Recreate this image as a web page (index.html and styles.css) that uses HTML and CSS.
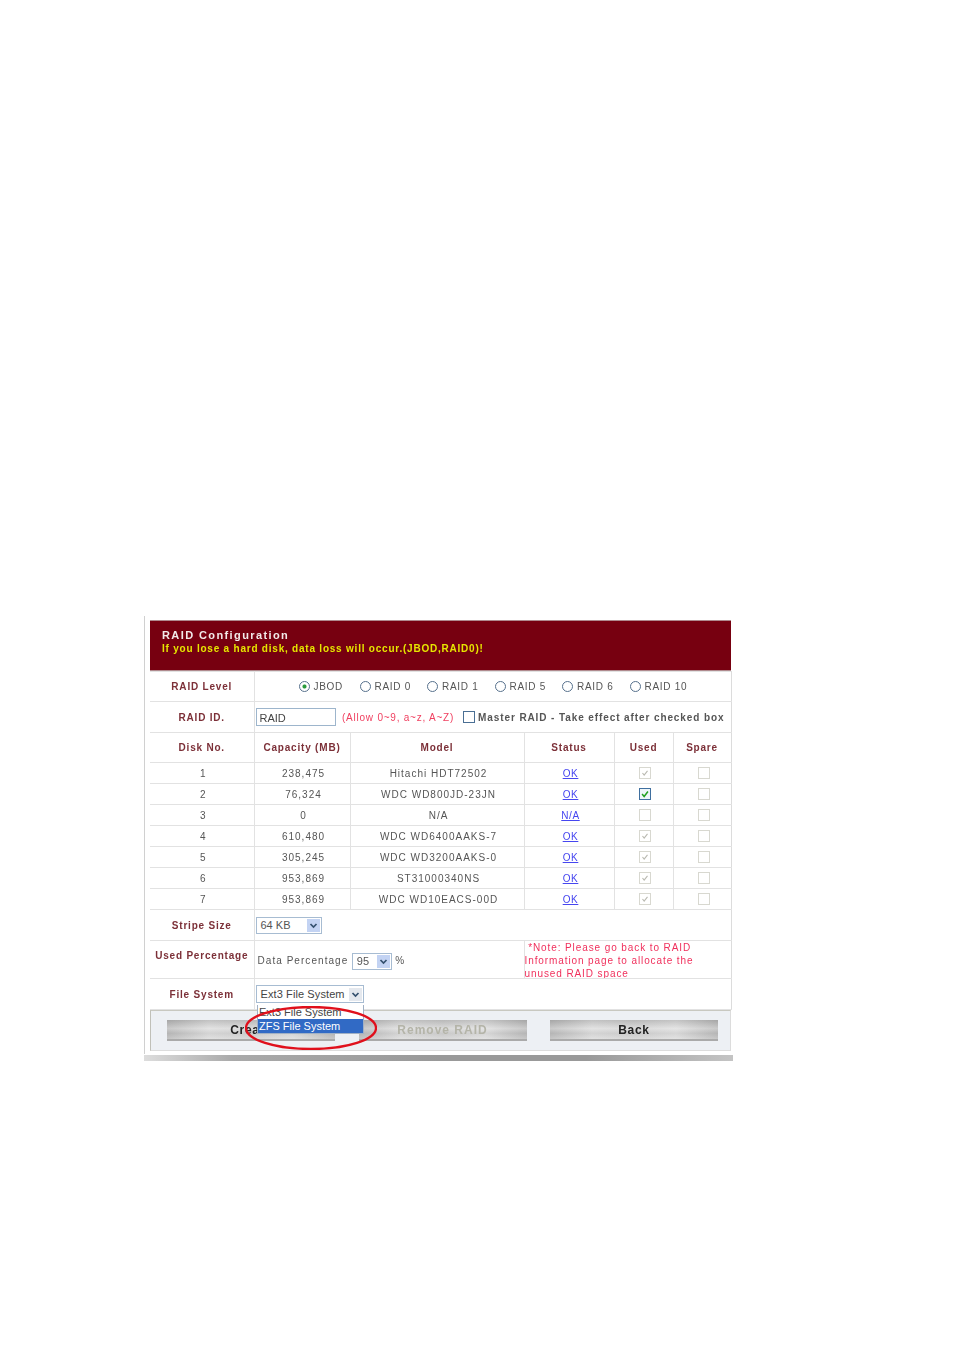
FILE: index.html
```html
<!DOCTYPE html>
<html lang="en">
<head>
<meta charset="utf-8">
<title>RAID Configuration</title>
<link rel="stylesheet" href="styles.css">
</head>
<body>
<main class="shot">
  <div class="panel">
    <header class="banner">
      <h1>RAID Configuration</h1>
      <p>If you lose a hard disk, data loss will occur.(JBOD,RAID0)!</p>
    </header>
    <table class="raid">
      <colgroup>
        <col class="c1"><col class="c2"><col class="c3"><col class="c4"><col class="c5"><col class="c6">
      </colgroup>
      <tr class="r30">
        <th>RAID Level</th>
        <td colspan="5" class="levels">
          <div class="optrow">
            <span class="opt first"><i class="radio on"></i>JBOD</span>
            <span class="opt"><i class="radio"></i>RAID 0</span>
            <span class="opt"><i class="radio"></i>RAID 1</span>
            <span class="opt"><i class="radio"></i>RAID 5</span>
            <span class="opt"><i class="radio"></i>RAID 6</span>
            <span class="opt"><i class="radio"></i>RAID 10</span>
          </div>
        </td>
      </tr>
      <tr class="r31">
        <th>RAID ID.</th>
        <td colspan="5" class="idcell">
          <span class="textbox">RAID</span>
          <span class="allow">(Allow 0~9, a~z, A~Z)</span>
          <i class="check master"></i>
          <span class="masterlabel">Master RAID - Take effect after checked box</span>
        </td>
      </tr>
      <tr class="r30">
        <th>Disk No.</th><th>Capacity (MB)</th><th>Model</th><th>Status</th><th>Used</th><th>Spare</th>
      </tr>
      <tr class="r21">
        <td>1</td><td>238,475</td><td>Hitachi HDT72502</td><td><a href="#">OK</a></td>
        <td><i class="check off"><svg viewBox="0 0 12 12"><path d="M3 6l2 2.500 4-5"/></svg></i></td><td><i class="check off"></i></td>
      </tr>
      <tr class="r21">
        <td>2</td><td>76,324</td><td>WDC WD800JD-23JN</td><td><a href="#">OK</a></td>
        <td><i class="check live"><svg viewBox="0 0 12 12"><path d="M2.500 6l2.500 3 4.500-6"/></svg></i></td><td><i class="check off"></i></td>
      </tr>
      <tr class="r21">
        <td>3</td><td>0</td><td>N/A</td><td><a href="#">N/A</a></td>
        <td><i class="check off"></i></td><td><i class="check off"></i></td>
      </tr>
      <tr class="r21">
        <td>4</td><td>610,480</td><td>WDC WD6400AAKS-7</td><td><a href="#">OK</a></td>
        <td><i class="check off"><svg viewBox="0 0 12 12"><path d="M3 6l2 2.500 4-5"/></svg></i></td><td><i class="check off"></i></td>
      </tr>
      <tr class="r21">
        <td>5</td><td>305,245</td><td>WDC WD3200AAKS-0</td><td><a href="#">OK</a></td>
        <td><i class="check off"><svg viewBox="0 0 12 12"><path d="M3 6l2 2.500 4-5"/></svg></i></td><td><i class="check off"></i></td>
      </tr>
      <tr class="r21">
        <td>6</td><td>953,869</td><td>ST31000340NS</td><td><a href="#">OK</a></td>
        <td><i class="check off"><svg viewBox="0 0 12 12"><path d="M3 6l2 2.500 4-5"/></svg></i></td><td><i class="check off"></i></td>
      </tr>
      <tr class="r21">
        <td>7</td><td>953,869</td><td>WDC WD10EACS-00D</td><td><a href="#">OK</a></td>
        <td><i class="check off"><svg viewBox="0 0 12 12"><path d="M3 6l2 2.500 4-5"/></svg></i></td><td><i class="check off"></i></td>
      </tr>
      <tr class="r31">
        <th>Stripe Size</th>
        <td colspan="5" class="left">
          <span class="select s64"><b>64 KB</b><i class="arrow"><svg viewBox="0 0 13 13"><path d="M3.500 5l3 3 3-3"/></svg></i></span>
        </td>
      </tr>
      <tr class="r38">
        <th class="top">Used Percentage</th>
        <td colspan="2" class="left pct">
          <span class="plain">Data Percentage</span>
          <span class="select s95"><b>95</b><i class="arrow"><svg viewBox="0 0 13 13"><path d="M3.500 5l3 3 3-3"/></svg></i></span>
          <span class="plain">%</span>
        </td>
        <td colspan="3" class="note"><div class="notetext">&nbsp;*Note: Please go back to RAID Information page to allocate the unused RAID space</div></td>
      </tr>
      <tr class="r31">
        <th>File System</th>
        <td colspan="5" class="left">
          <span class="select sfs"><b>Ext3 File System</b><i class="arrow plainarrow"><svg viewBox="0 0 13 13"><path d="M3.500 5l3 3 3-3"/></svg></i></span>
        </td>
      </tr>
    </table>
    <footer class="actions">
      <button class="btn" type="button">Create</button>
      <button class="btn dim" type="button">Remove RAID</button>
      <button class="btn" type="button">Back</button>
    </footer>
    <ul class="popup">
      <li>Ext3 File System</li>
      <li class="sel">ZFS File System</li>
    </ul>
    <svg class="ring" viewBox="0 0 132 44"><ellipse cx="66" cy="22" rx="65" ry="21"/></svg>
  </div>
  <div class="shade"></div>
</main>
</body>
</html>
```
FILE: styles.css
```css
html, body { margin: 0; background: #fff; }
body { height: 1350px; overflow: hidden; font-family: "Liberation Sans", Arial, sans-serif; }

.shot {
  width: 589px;
  margin: 616px 0 0 144px;
  filter: blur(0.4px);
}
.panel {
  position: relative;
  width: 581px;
  padding: 4px 2px 3px 5px;
  border-left: 1px solid #d0d0d0;
}
.banner {
  height: 51px;
  box-sizing: border-box;
  padding: 8px 0 0 12px;
  background: #770010;
  border-top: 1px solid #b08a8e;
  border-bottom: 1px solid #b08a8e;
}
.banner h1 { margin: 0; font-size: 11px; line-height: 13px; font-weight: 700; color: #f2eaea; letter-spacing: 1.4px; }
.banner p { margin: 0; font-size: 10px; line-height: 13px; font-weight: 700; color: #e6e600; letter-spacing: 0.78px; }

.raid {
  width: 581px;
  table-layout: fixed;
  border-collapse: collapse;
  font-size: 10px;
  letter-spacing: 0.72px;
  color: #555;
}
.c1 { width: 104px; } .c2 { width: 96px; } .c3 { width: 174px; }
.c4 { width: 90px; } .c5 { width: 59px; } .c6 { width: 58px; }
.raid th, .raid td {
  padding: 0;
  border: 1px solid #e2e2e2;
  text-align: center;
  vertical-align: middle;
  overflow: hidden;
  white-space: nowrap;
}
.raid tr > :first-child { border-left: 0; }
.raid tr > :last-child { border-right: 1px solid #dcdcdc; }
.raid th { font-weight: 700; color: #7c3038; letter-spacing: 0.8px; }
.r30 { height: 30px; } .r31 { height: 31px; } .r21 { height: 21px; } .r38 { height: 38px; }
.raid .r21 td { padding-left: 3px; letter-spacing: 1px; }
.raid th.top { vertical-align: top; padding-top: 9px; }

.levels { text-align: left !important; padding-left: 44px !important; }
.optrow { display: flex; align-items: center; }
.opt { flex: none; width: 67.500px; }
.opt.first { width: 61px; }
.radio {
  display: inline-block;
  width: 9px; height: 9px;
  margin-right: 4px;
  vertical-align: -2px;
  border: 1px solid #56708c;
  border-radius: 50%;
  background: #fff;
}
.radio.on { background: radial-gradient(circle, #2a9a3c 0 1.500px, #fff 2.500px); }

.idcell { text-align: left !important; padding-left: 1px !important; }
.textbox {
  display: inline-block;
  width: 75px; height: 16px;
  padding-left: 3px;
  line-height: 18px;
  font-size: 11px;
  letter-spacing: 0;
  color: #444;
  border: 1px solid #9db5cc;
  vertical-align: middle;
}
.allow { margin-left: 3px; color: #f04060; letter-spacing: 0.77px; vertical-align: middle; }
.masterlabel { font-weight: 700; color: #555; letter-spacing: 0.9px; vertical-align: middle; }

.check {
  display: inline-block;
  width: 10px; height: 10px;
  vertical-align: middle;
  border: 1px solid #d8d8d0;
  background: #fff;
}
.check svg { display: block; width: 10px; height: 10px; fill: none; stroke: #b8b8b0; stroke-width: 1.300; }
.check.live { border-color: #3f6f9f; background: #eef6fa; }
.check.live svg { stroke: #21a121; stroke-width: 1.800; }
.check.master { border-color: #4a6f94; margin-left: 5px; }
.raid a { color: #4646f0; text-decoration: underline; font-weight: 400; letter-spacing: 0.6px; }

.left { text-align: left !important; padding-left: 1px !important; }
.select {
  display: inline-flex;
  align-items: center;
  justify-content: space-between;
  height: 17px;
  box-sizing: border-box;
  border: 1px solid #a7bcd2;
  background: #fff;
  vertical-align: middle;
  padding: 0 1px 0 4px;
}
.select b { font-weight: 400; font-size: 11px; letter-spacing: 0; color: #555; }
.s64 { width: 66px; }
.s95 { width: 40px; }
.sfs { width: 108px; height: 18px; }
.sfs b { color: #444; letter-spacing: 0.1px; }
.arrow {
  display: block;
  width: 13px; height: 13px;
  background: #c3d3f3;
}
.plainarrow { background: #e4e8ee; }
.arrow svg { display: block; width: 13px; height: 13px; fill: none; stroke: #34506e; stroke-width: 1.700; }
.pct { padding-left: 3px !important; padding-top: 3px !important; }
.plain { color: #555; letter-spacing: 1.05px; }
.note {
  text-align: left !important;
  white-space: normal !important;
  vertical-align: top !important;
  color: #f0305c;
  letter-spacing: 0.9px;
  padding-right: 30px !important;
}
.notetext { line-height: 13px; margin-bottom: -2px; }

.actions {
  display: flex;
  justify-content: space-between;
  height: 41px;
  box-sizing: border-box;
  padding: 9px 12px 0 16px;
  background: #edf0f4;
  border-left: 1px solid #c0c0b8;
  border-right: 1px solid #dcdcdc;
  border-top: 1px solid #c8c8c0;
  border-bottom: 1px solid #ddd;
}
.btn {
  width: 168px;
  height: 21px;
  padding: 0;
  border: 0;
  font-family: inherit;
  font-size: 12px;
  font-weight: 700;
  letter-spacing: 0.7px;
  color: #222;
  background:
    linear-gradient(180deg, rgba(0,0,0,.12) 0, rgba(255,255,255,.2) 45%, rgba(0,0,0,.04) 70%, rgba(255,255,255,.15) 100%),
    linear-gradient(90deg, #bcbcbc, #dcdcdc 25%, #d2d2d2 50%, #dedede 75%, #bcbcbc);
  border-bottom: 2px solid #aaa;
}
.btn.dim { color: #b4b4a8; letter-spacing: 1px; }

.popup {
  position: absolute;
  left: 112px;
  top: 389px;
  width: 107px;
  margin: 0;
  padding: 0;
  list-style: none;
  font-size: 11px;
  line-height: 14px;
  color: #444;
  background: #fff;
  border: 1px solid #a0b0c4;
  border-top: 0;
  box-sizing: border-box;
}
.popup li { height: 14px; padding-left: 1px; }
.popup li.sel { background: #316ac5; color: #fff; }
.ring {
  position: absolute;
  left: 100px;
  top: 390px;
  width: 132px;
  height: 44px;
  fill: none;
  stroke: #e0101c;
  stroke-width: 2.300;
}
.shade {
  height: 6px;
  margin-top: 1px;
  background: linear-gradient(90deg, #ddd, #aaa 15%, #999 50%, #999 75%, #c4c4c4);
}
```
